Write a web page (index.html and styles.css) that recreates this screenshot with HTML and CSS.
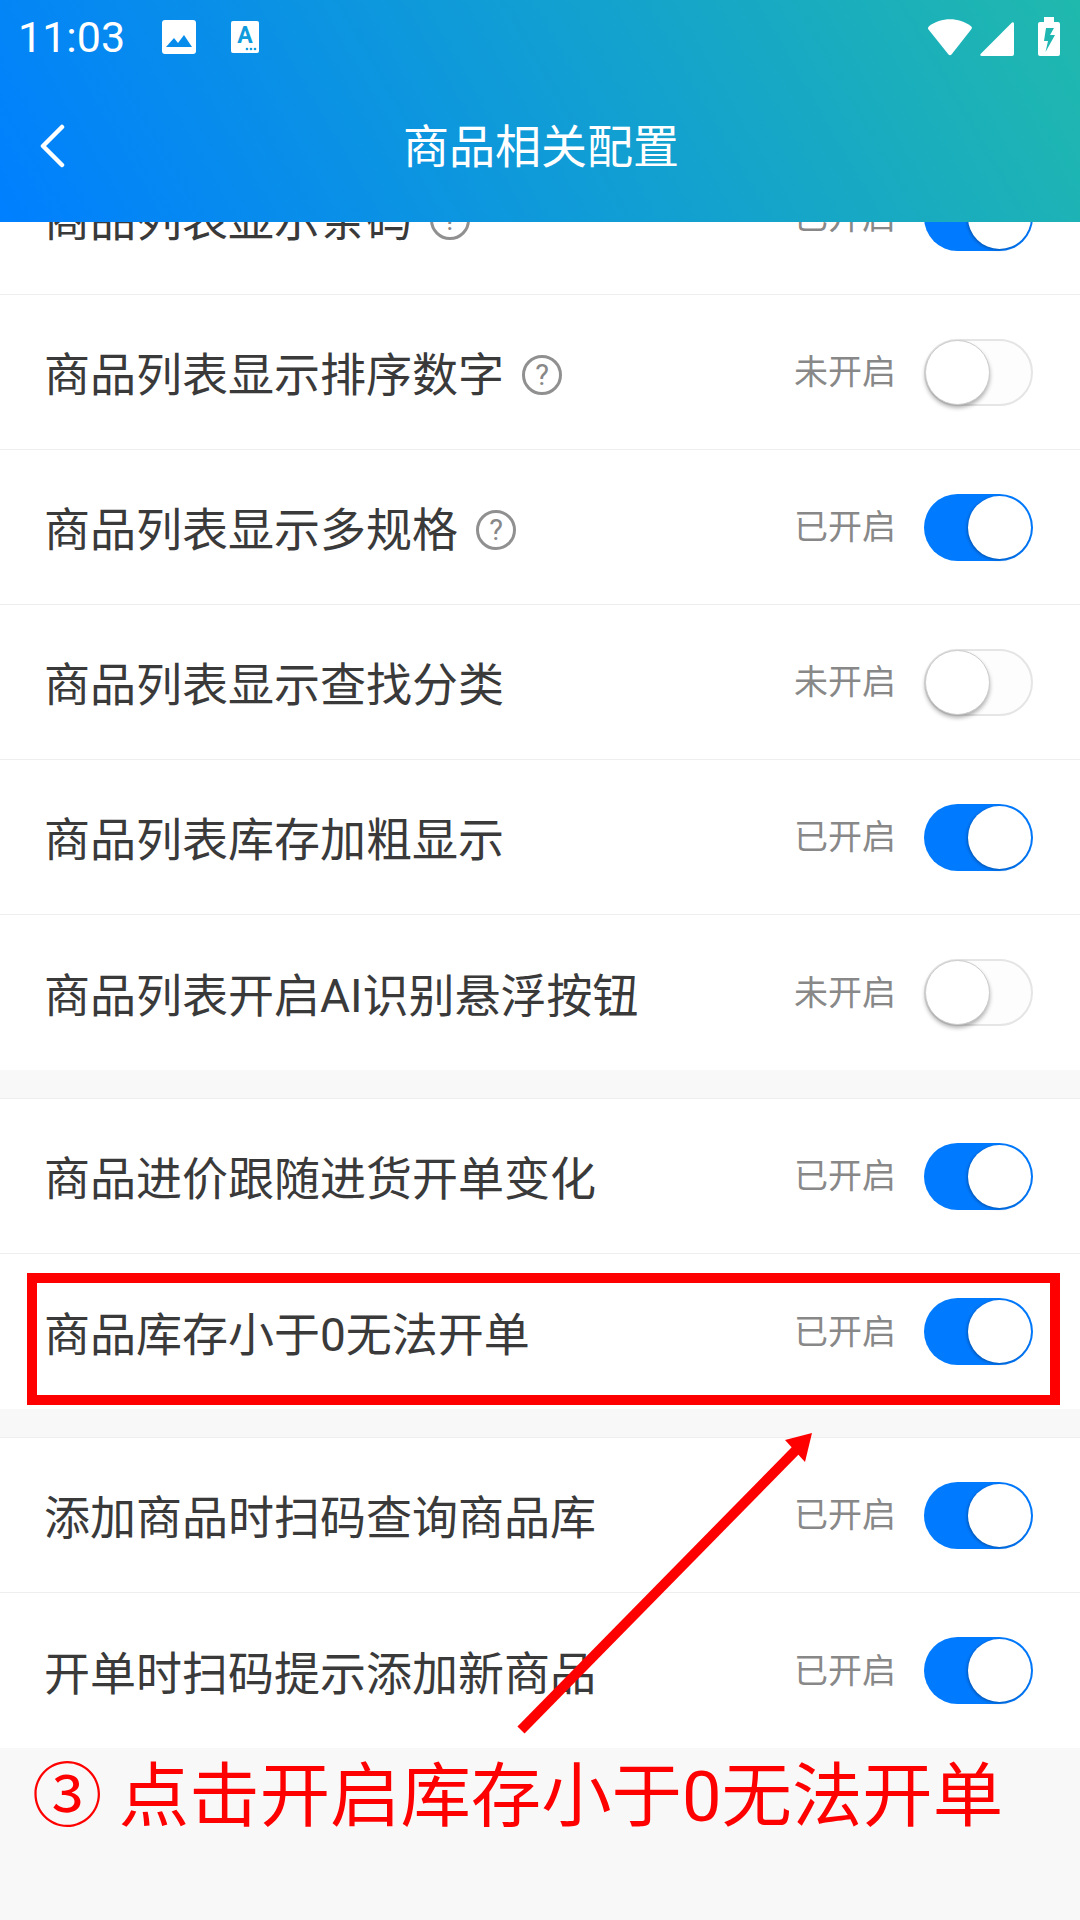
FILE: index.html
```html
<!DOCTYPE html>
<html lang="zh-CN">
<head>
  <meta charset="UTF-8" />
  <meta name="viewport" content="width=device-width, initial-scale=1.0" />
  <title>商品相关配置</title>
  <link rel="stylesheet" href="styles.css">
</head>
<body>
  <div class="phone">
    <header class="topbar">
      <div class="status-bar">
        <span class="time">11:03</span>
        <svg class="icon-photo" width="34" height="34" viewBox="0 0 34 34">
          <path fill="#fff" fill-rule="evenodd" d="M3 0H31a3 3 0 0 1 3 3V31a3 3 0 0 1-3 3H3a3 3 0 0 1-3-3V3a3 3 0 0 1 3-3ZM4 27H30L22 15 16 23 12 18Z"/>
        </svg>
        <svg class="icon-app" width="28" height="32" viewBox="0 0 28 32">
          <rect width="28" height="32" rx="2" fill="#fff"/>
          <text x="14" y="22" text-anchor="middle" class="icon-app-letter">A</text>
          <circle cx="16" cy="28" r="1.3" fill="#0f9bdc"/>
          <circle cx="20" cy="28" r="1.3" fill="#0f9bdc"/>
          <circle cx="24" cy="28" r="1.3" fill="#0f9bdc"/>
        </svg>
        <div class="status-right">
          <svg width="46" height="37" viewBox="0 0 46 37">
            <path fill="#fff" d="M1 9.5Q1 8 2 7.2C14-2 32-2 44 7.2Q45.500 8.500 44.500 10L24.500 35.500Q23 37 21.500 35.500L1.500 10.500Z"/>
          </svg>
          <svg width="34" height="34" viewBox="0 0 34 34">
            <path fill="#fff" d="M32 .6Q34-.6 34 2V32Q34 34 32 34H2Q-.6 34 .6 32Z"/>
          </svg>
          <svg width="22" height="39" viewBox="0 0 22 39">
            <path fill="#fff" fill-rule="evenodd" d="M6 0H16V5H20Q22 5 22 7V37Q22 39 20 39H2Q0 39 0 37V7Q0 5 2 5H6ZM8 11 6 24H10L7.500 35 17 18H12L16 11Z"/>
          </svg>
        </div>
      </div>
      <div class="navbar">
        <svg class="back" width="26" height="44" viewBox="0 0 26 44">
          <path d="M23 3 4 22 23 41" fill="none" stroke="#fff" stroke-width="4.500" stroke-linecap="round" stroke-linejoin="round"/>
        </svg>
        <h1>商品相关配置</h1>
      </div>
    </header>

    <main class="content">
      <section class="group first">
        <div class="row">
          <span class="label">商品列表显示条码<i class="help">?</i></span>
          <span class="state">已开启</span><span class="switch on"></span>
        </div>
        <div class="row">
          <span class="label">商品列表显示排序数字<i class="help">?</i></span>
          <span class="state">未开启</span><span class="switch"></span>
        </div>
        <div class="row">
          <span class="label">商品列表显示多规格<i class="help">?</i></span>
          <span class="state">已开启</span><span class="switch on"></span>
        </div>
        <div class="row">
          <span class="label">商品列表显示查找分类</span>
          <span class="state">未开启</span><span class="switch"></span>
        </div>
        <div class="row">
          <span class="label">商品列表库存加粗显示</span>
          <span class="state">已开启</span><span class="switch on"></span>
        </div>
        <div class="row">
          <span class="label">商品列表开启AI识别悬浮按钮</span>
          <span class="state">未开启</span><span class="switch"></span>
        </div>
      </section>

      <section class="group">
        <div class="row">
          <span class="label">商品进价跟随进货开单变化</span>
          <span class="state">已开启</span><span class="switch on"></span>
        </div>
        <div class="row">
          <span class="label">商品库存小于0无法开单</span>
          <span class="state">已开启</span><span class="switch on"></span>
        </div>
      </section>

      <section class="group">
        <div class="row">
          <span class="label">添加商品时扫码查询商品库</span>
          <span class="state">已开启</span><span class="switch on"></span>
        </div>
        <div class="row">
          <span class="label">开单时扫码提示添加新商品</span>
          <span class="state">已开启</span><span class="switch on"></span>
        </div>
      </section>

      <p class="caption">③ 点击开启库存小于0无法开单</p>
    </main>

    <!-- red marks drawn over the screenshot -->
    <div class="mark-box"></div>
    <svg class="mark-arrow" width="1080" height="1920" viewBox="0 0 1080 1920">
      <path d="M521 1730 796 1450" fill="none" stroke="#f00" stroke-width="10"/>
      <path d="M812 1433 785 1440 805 1462Z" fill="#f00"/>
    </svg>
  </div>
</body>
</html>
```

FILE: styles.css
```css
body {
  margin: 0;
  font-family: Roboto, "Noto Sans CJK SC", sans-serif;
  color: #3a3a3a;
}

.phone {
  position: relative;
  width: 1080px;
  height: 1920px;
  overflow: hidden;
  background: #f8f8f8;
}

/* Top bar */
.topbar {
  position: relative;
  z-index: 1;
  height: 222px;
  background: linear-gradient(60deg, #007fff 0%, #20b9ad 100%);
  color: #fff;
}

.status-bar {
  display: flex;
  align-items: center;
  height: 74px;
  padding: 0 20px 0 18px;
}

.time {
  width: 144px;
  font-size: 43px;
  line-height: 74px;
}

.icon-photo {
  margin-right: 35px;
}

.icon-app-letter {
  font-family: Roboto, sans-serif;
  font-weight: 700;
  font-size: 23px;
  fill: #0f9bdc;
}

.status-right {
  display: flex;
  align-items: flex-end;
  gap: 7px;
  margin-left: auto;
  padding-bottom: 1px;
}

.status-right svg:last-child {
  margin-left: 17px;
}

.navbar {
  position: relative;
  display: flex;
  align-items: center;
  justify-content: center;
  height: 148px;
}

.navbar h1 {
  margin: 0 0 2px 2px;
  font-size: 46px;
  font-weight: 400;
  line-height: 60px;
}

.back {
  position: absolute;
  left: 39px;
  top: 50px;
}

/* Settings list, first row scrolled under the top bar */
.content {
  margin-top: -82px;
}

.group {
  margin-bottom: 28px;
  background: #fff;
  border-top: 1px solid #eee;
}

.group.first {
  border-top: 0;
}

.row {
  display: flex;
  align-items: center;
  box-sizing: border-box;
  height: 155px;
  padding: 0 47px 0 44px;
  border-bottom: 1px solid #eee;
}

.row:last-child {
  border-bottom: 0;
}

.label {
  display: flex;
  align-items: center;
  flex: 1;
  padding-top: 6px;
  font-size: 46px;
  line-height: 60px;
}

.help {
  display: inline-block;
  box-sizing: border-box;
  width: 40px;
  height: 40px;
  margin-left: 18px;
  border: 3px solid #909090;
  border-radius: 50%;
  color: #888;
  font-size: 29px;
  font-style: normal;
  line-height: 34px;
  text-align: center;
}

.state {
  margin-right: 28px;
  font-size: 34px;
  line-height: 44px;
  color: #888;
}

.switch {
  position: relative;
  box-sizing: border-box;
  width: 109px;
  height: 67px;
  background: #fdfdfd;
  border: 2px solid #e5e5e5;
  border-radius: 34px;
}

.switch::after {
  content: "";
  position: absolute;
  left: -1px;
  top: -1px;
  box-sizing: border-box;
  width: 65px;
  height: 65px;
  background: #fff;
  border: 1px solid #ccc;
  border-radius: 50%;
  box-shadow: 0 3px 4px rgba(0, 0, 0, 0.3);
}

.switch.on {
  background: #007aff;
  border: 0;
}

.switch.on::after {
  left: auto;
  right: 2px;
  top: 2px;
  width: 63px;
  height: 63px;
  border: 0;
  box-shadow: -1px 1px 3px rgba(0, 0, 0, 0.3);
}

.caption {
  margin: -29px 0 0;
  padding: 4px 0 0 32px;
  font-size: 70.4px;
  line-height: 92px;
  word-spacing: -1px;
  color: #f00;
}

/* Annotation */
.mark-box {
  position: absolute;
  left: 27px;
  top: 1273px;
  box-sizing: border-box;
  width: 1033px;
  height: 132px;
  border: 10px solid #f00;
}

.mark-arrow {
  position: absolute;
  left: 0;
  top: 0;
}
```
